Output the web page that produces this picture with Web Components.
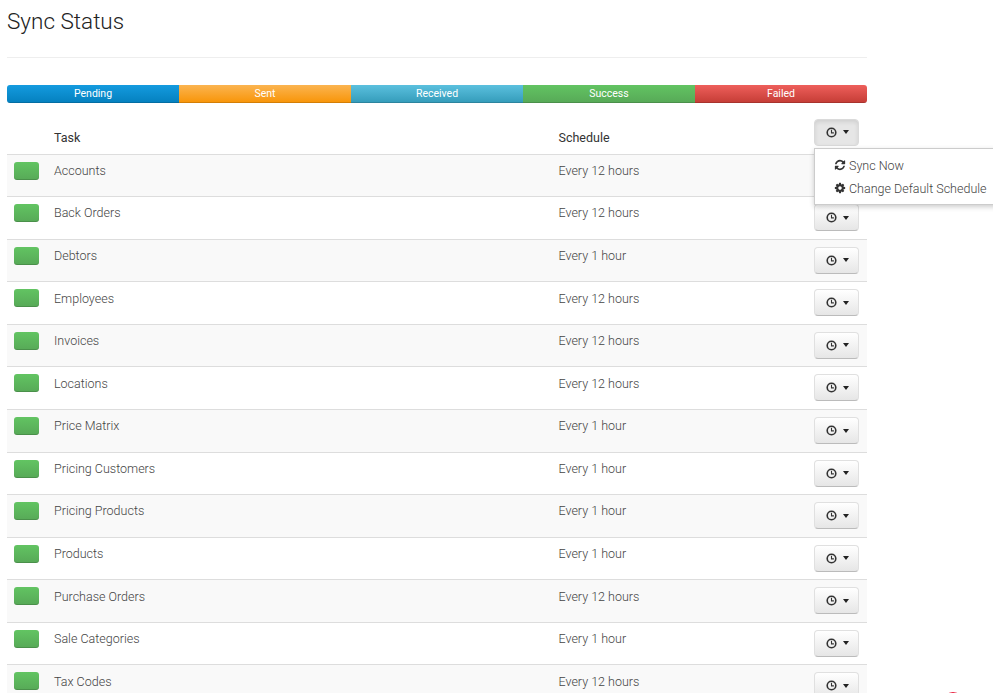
<!DOCTYPE html>
<html>
<head>
<meta charset="utf-8">
<title>Sync Status</title>
<style>
  html, body { margin: 0; height: 100%; overflow: hidden; background: #fff; }
  body { font-family: Roboto, "Liberation Sans", sans-serif; font-size: 12.5px; font-weight: 300; color: #444; }
</style>
</head>
<body>
<sync-page>
  <sync-legend slot="legend"></sync-legend>
  <sync-table slot="table"></sync-table>
</sync-page>
<chat-dot></chat-dot>

<script>
const ICONS = {
  refresh: 'M1639 1056q0 5-1 7-64 268-268 434.5t-478 166.5q-146 0-282.5-55t-243.5-157l-129 129q-19 19-45 19t-45-19-19-45v-448q0-26 19-45t45-19h448q26 0 45 19t19 45-19 45l-137 137q71 66 161 102t187 36q134 0 250-65t186-179q11-17 53-117 8-23 30-23h192q13 0 22.5 9.5t9.5 22.5zm25-800v448q0 26-19 45t-45 19h-448q-26 0-45-19t-19-45 19-45l138-138q-148-137-349-137-134 0-250 65t-186 179q-11 17-53 117-8 23-30 23h-199q-13 0-22.5-9.5t-9.5-22.5v-7q65-268 270-434.5t480-166.5q146 0 284 55.5t245 156.5l130-129q19-19 45-19t45 19 19 45z',
  cog: 'M1152 896q0-106-75-181t-181-75-181 75-75 181 75 181 181 75 181-75 75-181zm512-109v222q0 12-8 23t-20 13l-185 28q-19 54-39 91 35 50 107 138 10 12 10 25t-9 23q-27 37-99 108t-94 71q-12 0-26-9l-138-108q-44 23-91 38-16 136-29 186-7 28-36 28h-222q-14 0-24.5-8.5t-11.5-21.5l-28-184q-49-16-90-37l-141 107q-10 9-25 9-14 0-25-11-126-114-165-168-7-10-7-23 0-12 8-23 15-21 51-66.5t54-70.5q-27-50-41-99l-183-27q-13-2-21-12.5t-8-23.5v-222q0-12 8-23t19-13l186-28q14-46 39-92-40-57-107-138-10-12-10-24 0-10 9-23 26-36 98.5-107.5t94.5-71.5q13 0 26 10l138 107q44-23 91-38 16-136 29-186 7-28 36-28h222q14 0 24.5 8.5t11.5 21.5l28 184q49 16 90 37l142-107q9-9 24-9 13 0 25 10 129 119 165 170 7 8 7 22 0 12-8 23-15 21-51 66.5t-54 70.5q26 50 41 98l183 28q13 2 21 12.5t8 23.5z'
};

const COLUMNS = '47px 504.5px 255.5px 1fr';

class SyncPage extends HTMLElement {
  constructor() {
    super();
    this.attachShadow({ mode: 'open' });
    this.shadowRoot.innerHTML = `
      <style>
        :host { display: block; width: 860px; margin-left: 7px; }
        h1 {
          margin: 0;
          padding-top: 5px;
          font-size: 22.5px;
          font-weight: 300;
          line-height: 33px;
          color: #222;
        }
        hr { border: 0; border-top: 1px solid #eee; margin: 19px 0 27px; }
      </style>
      <h1>Sync Status</h1>
      <hr>
      <slot name="legend"></slot>
      <slot name="table"></slot>
    `;
  }
}

class SyncLegend extends HTMLElement {
  constructor() {
    super();
    this.attachShadow({ mode: 'open' });
    this.shadowRoot.innerHTML = `
      <style>
        :host {
          display: flex;
          height: 18px;
          border-radius: 3px;
          overflow: hidden;
          margin-bottom: 15.65px;
          font-size: 10.5px;
          font-weight: 400;
          line-height: 17px;
          color: #fff;
          text-align: center;
        }
        div { flex: 1 1 0; box-shadow: inset 0 -1px 0 rgba(0,0,0,.15); }
        .pending { background: linear-gradient(#149bdf, #0480be); }
        .sent { background: linear-gradient(#fbb450, #f89406); }
        .received { background: linear-gradient(#5bc0de, #339bb9); }
        .success { background: linear-gradient(#62c462, #57a957); }
        .failed { background: linear-gradient(#ee5f5b, #c43c35); }
      </style>
      <div class="pending">Pending</div>
      <div class="sent">Sent</div>
      <div class="received">Received</div>
      <div class="success">Success</div>
      <div class="failed">Failed</div>
    `;
  }
}

class ScheduleButton extends HTMLElement {
  constructor() {
    super();
    this.attachShadow({ mode: 'open' });
    this.shadowRoot.innerHTML = `
      <style>
        :host { display: block; width: 45px; height: 27px; }
        button {
          display: flex;
          align-items: center;
          justify-content: center;
          gap: 6px;
          box-sizing: border-box;
          width: 100%;
          height: 100%;
          padding: 0 0 0 1px;
          border: 1px solid #e0e0e0;
          border-bottom-color: #bbb;
          border-radius: 4px;
          background: linear-gradient(#fff, #e6e6e6);
        }
        :host([open]) button {
          background: #e6e6e6;
          box-shadow: inset 0 2px 4px rgba(0,0,0,.1);
          border-color: #dadada;
        }
        svg { width: 11px; height: 11px; display: block; }
        i { border-top: 4px solid #222; border-left: 3px solid transparent; border-right: 3px solid transparent; }
      </style>
      <button>
        <svg viewBox="0 0 11 11" fill="none" stroke="#333"><circle cx="5.5" cy="5.5" r="4.3" stroke-width="1.6"/><path d="M5.5 2.8v3.1h2.4" stroke-width="1.1"/></svg>
        <i></i>
      </button>
    `;
  }
}

class SyncRow extends HTMLElement {
  constructor() {
    super();
    this.attachShadow({ mode: 'open' });
    this.shadowRoot.innerHTML = `
      <style>
        :host {
          display: grid;
          grid-template-columns: ${COLUMNS};
          box-sizing: border-box;
          height: 42.57px;
          border-top: 1px solid #ddd;
        }
        :host(:nth-child(odd)) { background: #f9f9f9; }
        .status { padding: 7px 0 0 7px; }
        .bar {
          width: 25px;
          height: 18px;
          border-radius: 3px;
          background: linear-gradient(#62c462, #57a957);
          box-shadow: inset 0 -1px 0 rgba(0,0,0,.15);
        }
        .text { padding-top: 7.25px; line-height: 18px; }
        .action { padding-top: 7px; }
      </style>
      <div class="status"><div class="bar"></div></div>
      <div class="text"><slot name="task"></slot></div>
      <div class="text"><slot name="schedule"></slot></div>
      <div class="action"><schedule-button></schedule-button></div>
    `;
  }
}

class SyncMenu extends HTMLElement {
  constructor() {
    super();
    this.attachShadow({ mode: 'open' });
    this.shadowRoot.innerHTML = `
      <style>
        :host {
          position: absolute;
          left: 814px;
          top: 148px;
          width: 190px;
          height: 57px;
          box-sizing: border-box;
          padding: 5px 0 0 19px;
          background: #fff;
          border: 1px solid #ccc;
          box-shadow: 0 2px 5px rgba(0,0,0,.2);
          white-space: nowrap;
        }
        div { display: flex; align-items: center; gap: 3px; height: 23px; }
        svg { width: 12px; height: 12px; fill: #333; transform: translateY(-1px); }
      </style>
      <div><svg viewBox="0 0 1792 1792"><path d="${ICONS.refresh}"/></svg>Sync Now</div>
      <div><svg viewBox="0 0 1792 1792"><path d="${ICONS.cog}"/></svg>Change Default Schedule</div>
    `;
  }
}

class SyncTable extends HTMLElement {
  constructor() {
    super();
    this.attachShadow({ mode: 'open' });
    const rows = [
      ['Accounts', 'Every 12 hours'], ['Back Orders', 'Every 12 hours'], ['Debtors', 'Every 1 hour'],
      ['Employees', 'Every 12 hours'], ['Invoices', 'Every 12 hours'], ['Locations', 'Every 12 hours'],
      ['Price Matrix', 'Every 1 hour'], ['Pricing Customers', 'Every 1 hour'], ['Pricing Products', 'Every 1 hour'],
      ['Products', 'Every 1 hour'], ['Purchase Orders', 'Every 12 hours'], ['Sale Categories', 'Every 1 hour'],
      ['Tax Codes', 'Every 12 hours']
    ];
    this.shadowRoot.innerHTML = `
      <style>
        :host { display: block; }
        .head {
          display: grid;
          grid-template-columns: ${COLUMNS};
          height: 35px;
          color: #333;
          font-weight: 400;
          line-height: 18px;
        }
        .head span { padding-top: 10px; }
      </style>
      <div class="head">
        <span></span><span>Task</span><span>Schedule</span>
        <schedule-button open></schedule-button>
      </div>
      <div class="rows"></div>
      <sync-menu></sync-menu>
    `;
    const body = this.shadowRoot.querySelector('.rows');
    rows.forEach(([task, schedule]) => {
      const row = document.createElement('sync-row');
      const a = document.createElement('span');
      a.slot = 'task';
      a.textContent = task;
      const b = document.createElement('span');
      b.slot = 'schedule';
      b.textContent = schedule;
      row.append(a, b);
      body.appendChild(row);
    });
  }
}

class ChatDot extends HTMLElement {
  constructor() {
    super();
    this.attachShadow({ mode: 'open' }).innerHTML = `
      <style>
        :host { position: absolute; left: 943px; top: 692px; width: 20px; height: 20px; border-radius: 50%; background: #e8213f; }
      </style>
    `;
  }
}

customElements.define('sync-page', SyncPage);
customElements.define('sync-legend', SyncLegend);
customElements.define('schedule-button', ScheduleButton);
customElements.define('sync-row', SyncRow);
customElements.define('sync-menu', SyncMenu);
customElements.define('sync-table', SyncTable);
customElements.define('chat-dot', ChatDot);
</script>
</body>
</html>
